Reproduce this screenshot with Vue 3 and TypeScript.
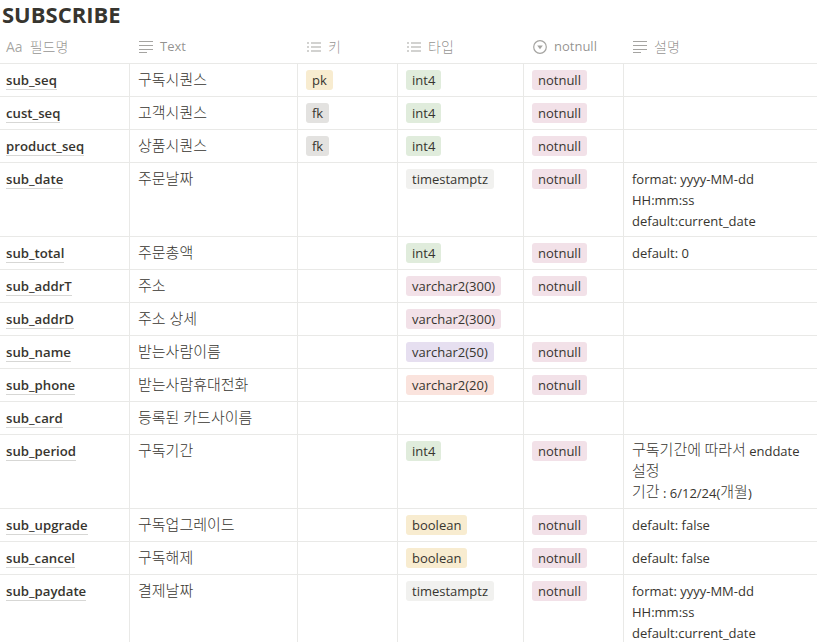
<script setup lang="ts">
type Tag = { t: string; c: string } | null
interface Row { name: string; text: string; key: Tag; type: Tag; nn: boolean; desc: string[] }

const pk: Tag = { t: 'pk', c: 'yellow' }
const fk: Tag = { t: 'fk', c: 'gray' }
const int4: Tag = { t: 'int4', c: 'green' }
const ts: Tag = { t: 'timestamptz', c: 'light' }
const bool: Tag = { t: 'boolean', c: 'yellow' }
const v300: Tag = { t: 'varchar2(300)', c: 'pink' }
const fmt = ['format: yyyy-MM-dd', 'HH:mm:ss', 'default:current_date']

const rows: Row[] = [
  { name: 'sub_seq', text: '구독시퀀스', key: pk, type: int4, nn: true, desc: [] },
  { name: 'cust_seq', text: '고객시퀀스', key: fk, type: int4, nn: true, desc: [] },
  { name: 'product_seq', text: '상품시퀀스', key: fk, type: int4, nn: true, desc: [] },
  { name: 'sub_date', text: '주문날짜', key: null, type: ts, nn: true, desc: fmt },
  { name: 'sub_total', text: '주문총액', key: null, type: int4, nn: true, desc: ['default: 0'] },
  { name: 'sub_addrT', text: '주소', key: null, type: v300, nn: true, desc: [] },
  { name: 'sub_addrD', text: '주소 상세', key: null, type: v300, nn: false, desc: [] },
  { name: 'sub_name', text: '받는사람이름', key: null, type: { t: 'varchar2(50)', c: 'purple' }, nn: true, desc: [] },
  { name: 'sub_phone', text: '받는사람휴대전화', key: null, type: { t: 'varchar2(20)', c: 'red' }, nn: true, desc: [] },
  { name: 'sub_card', text: '등록된 카드사이름', key: null, type: null, nn: false, desc: [] },
  { name: 'sub_period', text: '구독기간', key: null, type: int4, nn: true, desc: ['구독기간에 따라서 enddate', '설정', '기간 : 6/12/24(개월)'] },
  { name: 'sub_upgrade', text: '구독업그레이드', key: null, type: bool, nn: true, desc: ['default: false'] },
  { name: 'sub_cancel', text: '구독해제', key: null, type: bool, nn: true, desc: ['default: false'] },
  { name: 'sub_paydate', text: '결제날짜', key: null, type: ts, nn: true, desc: fmt },
]

// Hangul runs are set larger than Latin runs, as in the reference's font pair.
function runs(s: string): { s: string; ko: boolean }[] {
  return (s.match(/[\uac00-\ud7a3]+|[^\uac00-\ud7a3]+/g) ?? []).map((p) => ({
    s: p,
    ko: /[\uac00-\ud7a3]/.test(p),
  }))
}
</script>

<template>
  <div class="page">
    <h1 class="title">SUBSCRIBE</h1>
    <div class="table">
      <div class="row head">
        <div class="cell h"><span class="aa">Aa</span><span class="hko">필드명</span></div>
        <div class="cell h">
          <svg class="ico" viewBox="0 0 14 12"><path d="M0 .500h14M0 4.500h14M0 8.500h14M0 11.500h8" /></svg><span>Text</span>
        </div>
        <div class="cell h">
          <svg class="ico" viewBox="0 0 14 12"><path d="M0 2h2M4 2h10M0 6h2M4 6h10M0 10h2M4 10h10" /></svg><span class="hko">키</span>
        </div>
        <div class="cell h">
          <svg class="ico" viewBox="0 0 14 12"><path d="M0 2h2M4 2h10M0 6h2M4 6h10M0 10h2M4 10h10" /></svg><span class="hko">타입</span>
        </div>
        <div class="cell h">
          <svg class="ico circ" viewBox="0 0 14 14">
            <circle cx="7" cy="7" r="6.300" fill="none" />
            <path class="solid" d="M4.200 5.600h5.600L7 9.300z" />
          </svg><span>notnull</span>
        </div>
        <div class="cell h">
          <svg class="ico" viewBox="0 0 14 12"><path d="M0 .500h14M0 4.500h14M0 8.500h14M0 11.500h8" /></svg><span class="hko">설명</span>
        </div>
      </div>
      <div v-for="r in rows" :key="r.name" class="row">
        <div class="cell"><span class="name">{{ r.name }}</span></div>
        <div class="cell txt">{{ r.text }}</div>
        <div class="cell tagcell"><span v-if="r.key" class="tag" :class="r.key.c">{{ r.key.t }}</span></div>
        <div class="cell tagcell"><span v-if="r.type" class="tag" :class="r.type.c">{{ r.type.t }}</span></div>
        <div class="cell tagcell"><span v-if="r.nn" class="tag pink">notnull</span></div>
        <div class="cell desc">
          <div v-for="d in r.desc" :key="d" class="line">
            <span v-for="(p, i) in runs(d)" :key="i" :class="{ ko: p.ko }">{{ p.s }}</span>
          </div>
        </div>
      </div>
    </div>
  </div>
</template>

<style>
html, body { margin: 0; background: #fff; overflow: hidden; }
</style>

<style scoped>
.page {
  width: 817px;
  height: 642px;
  overflow: hidden;
  font-family: "Open Sans", "Noto Sans CJK KR", sans-serif;
  color: #37352f;
  font-size: 13px;
}
.title {
  margin: 0;
  padding: 0 0 0 2px;
  height: 30px;
  font-size: 22px;
  line-height: 28px;
  font-weight: 700;
}
.row {
  display: grid;
  grid-template-columns: 130px 168px 100px 126px 100px 1fr;
  border-bottom: 1px solid #e9e9e7;
  min-height: 32px;
}
.head { height: 34px; box-sizing: border-box; }
.cell {
  box-sizing: border-box;
  border-right: 1px solid #e9e9e7;
  padding: 5px 8px;
  line-height: 21px;
  min-width: 0;
}
.cell:last-child { border-right: 0; }
.row:not(.head) .cell:first-child { padding-left: 6px; padding-top: 6px; }
.h {
  display: flex;
  align-items: center;
  gap: 7px;
  color: rgba(55, 53, 47, 0.55);
  padding: 0 8px 0 6px;
  border-right: 0;
  font-size: 13px;
}
.hko { font-size: 14px; font-weight: 300; }
.aa { color: rgba(55, 53, 47, 0.45); font-size: 14px; }
.ico {
  width: 14px;
  height: 12px;
  flex: none;
  stroke: rgba(55, 53, 47, 0.45);
  stroke-width: 1;
  fill: none;
  margin-left: 3px;
}
.circ { height: 14px; width: 14px; }
.circ circle { stroke-width: 1.2; }
.solid { fill: rgba(55, 53, 47, 0.45); stroke: none; }
.name {
  font-weight: 600;
  font-size: 13.2px;
  border-bottom: 1px solid rgba(55, 53, 47, 0.2);
  white-space: nowrap;
}
.txt { font-size: 15px; font-weight: 300; }
.tagcell { padding: 6px 8px 0; }
.tag {
  display: inline-block;
  height: 20px;
  line-height: 20px;
  padding: 0 6px;
  border-radius: 3px;
  font-size: 13px;
  white-space: nowrap;
  vertical-align: top;
}
.yellow { background: #f8ecd0; }
.gray { background: #e3e2e0; }
.green { background: #e0ecdc; }
.light { background: #f1f1ef; }
.pink { background: #f2e1e8; }
.purple { background: #e6dff0; }
.red { background: #fae3dd; }
.desc { padding: 6px 8px 4px; }
.line { white-space: nowrap; height: 21px; }
.ko { font-size: 15px; font-weight: 300; line-height: 1; vertical-align: 1px; }
</style>
